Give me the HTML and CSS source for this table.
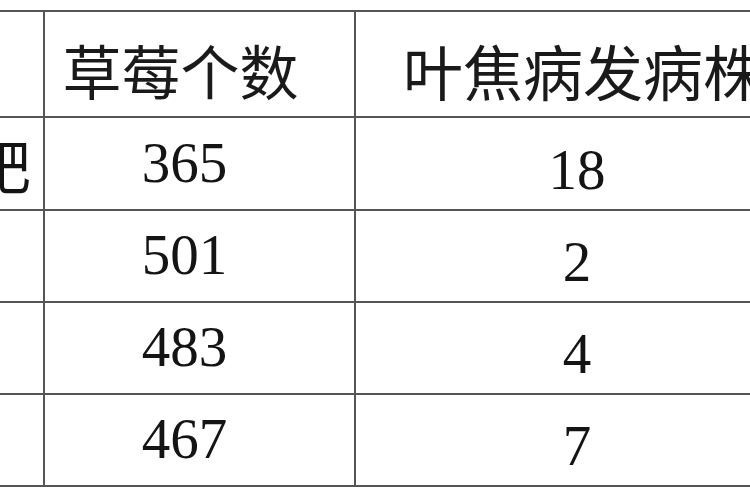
FILE: index.html
```html
<!DOCTYPE html>
<html lang="zh-CN">
<head>
<meta charset="utf-8">
<title>草莓叶焦病统计</title>
<link rel="stylesheet" href="styles.css">
</head>
<body>
<div class="clip">
  <table class="data">
    <tr class="head">
      <th class="c1"></th>
      <th class="c2">草莓个数</th>
      <th class="c3">叶焦病发病株数</th>
    </tr>
    <tr class="r1">
      <td class="c1 label">施肥</td>
      <td class="c2 num">365</td>
      <td class="c3 num">18</td>
    </tr>
    <tr>
      <td class="c1 label"></td>
      <td class="c2 num">501</td>
      <td class="c3 num">2</td>
    </tr>
    <tr>
      <td class="c1 label"></td>
      <td class="c2 num">483</td>
      <td class="c3 num">4</td>
    </tr>
    <tr>
      <td class="c1 label"></td>
      <td class="c2 num">467</td>
      <td class="c3 num">7</td>
    </tr>
  </table>
</div>
</body>
</html>
```
FILE: styles.css
```css
html, body {
  margin: 0;
  padding: 0;
  background: #ffffff;
}

.clip {
  width: 750px;
  height: 500px;
  overflow: hidden;
  padding-top: 10px;
  box-sizing: border-box;
}

.data {
  margin-left: -100px;
  border-collapse: separate;
  border-spacing: 0;
  table-layout: fixed;
  width: 900px;
  border-top: 2px solid #555555;
  color: #141414;
}

.data th,
.data td {
  box-sizing: border-box;
  border-right: 2px solid #555555;
  border-bottom: 2px solid #555555;
  padding: 0;
  text-align: center;
  vertical-align: middle;
  white-space: nowrap;
  overflow: hidden;
}

.c1 { width: 145px; }
.c2 { width: 311px; }
.c3 { width: 444px; }

.head th {
  height: 106px;
  font-family: "Noto Sans CJK SC", sans-serif;
  font-weight: 400;
  font-size: 59px;
  line-height: 60px;
  padding-top: 12px;
  color: #1a1a1a;
}

.head th.c2 {
  padding-right: 38px;
}

.head th.c3 {
  text-align: left;
  padding-left: 47px;
  font-size: 60px;
}

.data td {
  height: 92px;
  font-family: "Liberation Serif", serif;
  font-size: 57px;
  line-height: 58px;
}

.r1 td {
  height: 93px;
}

.data td.c2 {
  padding-right: 30px;
  padding-bottom: 2px;
}

.data td.c3 {
  padding-top: 12px;
}

.data td.label {
  text-align: right;
  padding-right: 12px;
  font-family: "Noto Sans CJK SC", sans-serif;
  font-size: 58px;
}
```
